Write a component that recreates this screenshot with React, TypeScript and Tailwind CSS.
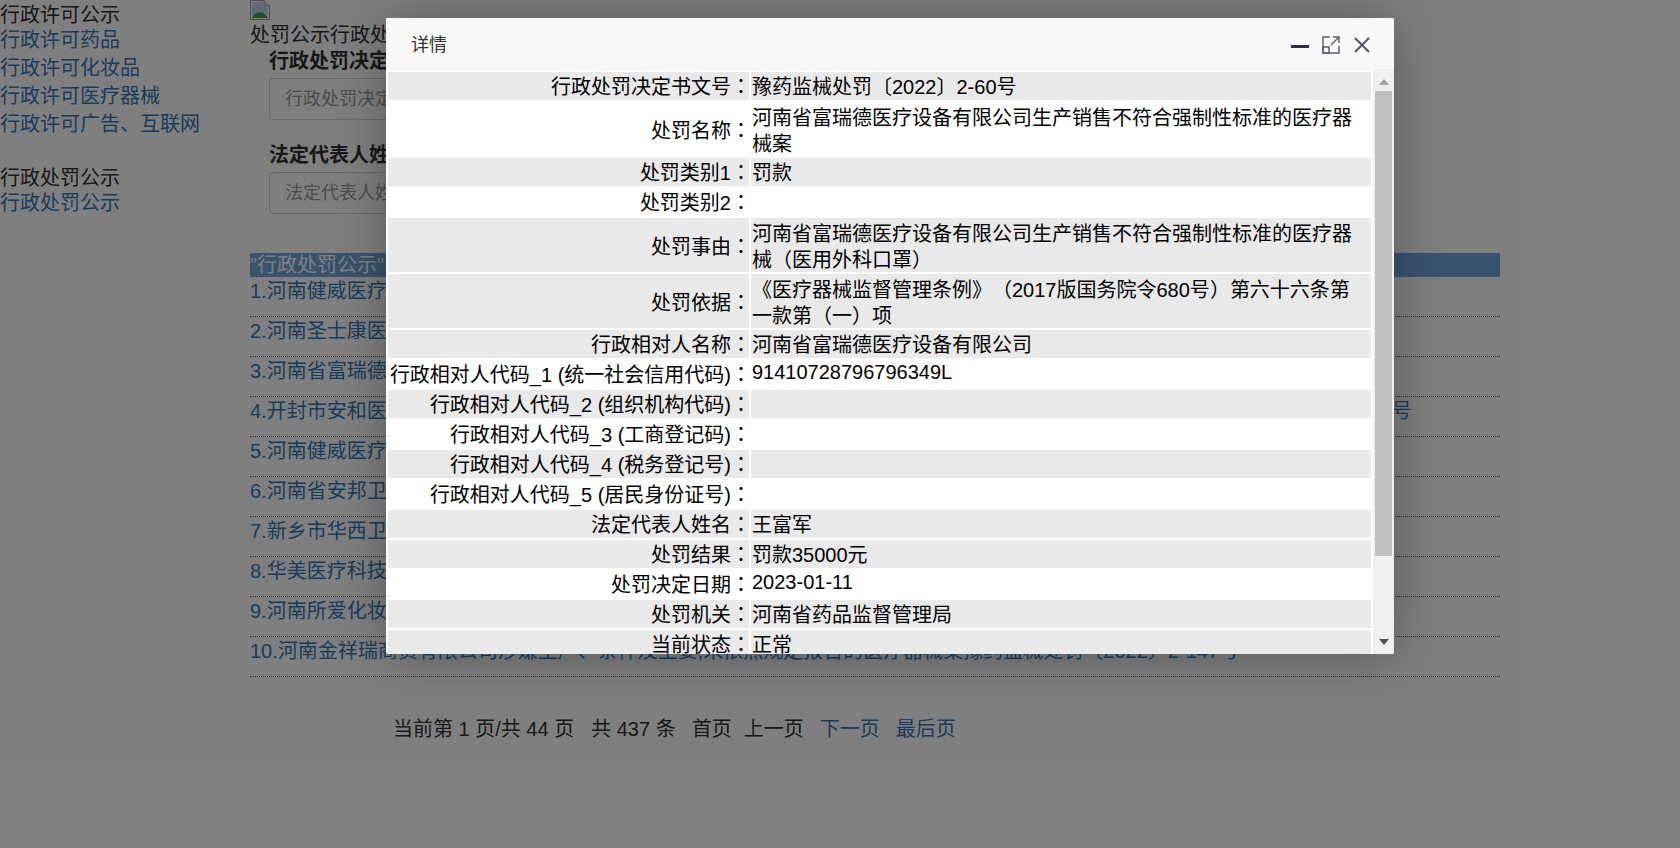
const navGroups = [
  { title: "行政许可公示", links: ["行政许可药品", "行政许可化妆品", "行政许可医疗器械", "行政许可广告、互联网"] },
  { title: "行政处罚公示", links: ["行政处罚公示"] },
]

const rows = [
  "1.河南健威医疗",
  "2.河南圣士康医",
  "3.河南省富瑞德",
  "4.开封市安和医",
  "5.河南健威医疗",
  "6.河南省安邦卫",
  "7.新乡市华西卫",
  "8.华美医疗科技",
  "9.河南所爱化妆",
  "10.河南金祥瑞商贸有限公司涉嫌生产、条件及主要,未依照规定报告的医疗器械案豫药监械处罚〔2022〕2-147号",
]

// label, value, grey row, how the value sits in its cell
type Sit = "raised" | "wrapped"
const details: [string, string, boolean, Sit?][] = [
  ["行政处罚决定书文号", "豫药监械处罚〔2022〕2-60号", true],
  ["处罚名称", "河南省富瑞德医疗设备有限公司生产销售不符合强制性标准的医疗器械案", false, "wrapped"],
  ["处罚类别1", "罚款", true],
  ["处罚类别2", "", false],
  ["处罚事由", "河南省富瑞德医疗设备有限公司生产销售不符合强制性标准的医疗器械（医用外科口罩）", true, "wrapped"],
  ["处罚依据", "《医疗器械监督管理条例》（2017版国务院令680号）第六十六条第一款第（一）项", true, "wrapped"],
  ["行政相对人名称", "河南省富瑞德医疗设备有限公司", true],
  ["行政相对人代码_1 (统一社会信用代码)", "91410728796796349L", false, "raised"],
  ["行政相对人代码_2 (组织机构代码)", "", true],
  ["行政相对人代码_3 (工商登记码)", "", false],
  ["行政相对人代码_4 (税务登记号)", "", true],
  ["行政相对人代码_5 (居民身份证号)", "", false],
  ["法定代表人姓名", "王富军", true],
  ["处罚结果", "罚款35000元", true],
  ["处罚决定日期", "2023-01-11", false, "raised"],
  ["处罚机关", "河南省药品监督管理局", true],
  ["当前状态", "正常", true],
]

// the TC face centres full-width punctuation in its box
function Punctuated({ text }: { text: string }) {
  return (
    <>
      {text.split(/([（）《》])/).map((part, i) =>
        i % 2 === 1 ? (
          <span key={i} className="leading-none font-['Noto_Sans_CJK_TC',sans-serif]">{part}</span>
        ) : (
          part
        )
      )}
    </>
  )
}

function BrokenImage() {
  return (
    <svg width="20" height="20" viewBox="0 0 20 20" className="block">
      <path d="M0.5 0.5H14L19.5 6V19.5H0.5Z" fill="#fff" stroke="#999" />
      <path d="M14 0.5V6H19.5" fill="#ddd" stroke="#999" />
      <path d="M2 2H13V7H18V14L2 18Z" fill="#c3d4ee" />
      <path d="M2 18C4 13 9 11 13 13C15 14 17 16 18 18Z" fill="#4d9a3c" />
    </svg>
  )
}

function Field({ label, placeholder }: { label: string; placeholder: string }) {
  return (
    <div className="h-[94px]">
      <div className="h-[32px] text-[20px] leading-[30px] font-bold whitespace-nowrap">{label}</div>
      <div className="w-[400px] h-[42px] border border-[#ccc] rounded-[4px] px-[15px] text-[18px] leading-[40px] text-[#999] whitespace-nowrap">
        {placeholder}
      </div>
    </div>
  )
}

function Modal() {
  return (
    <div className="absolute left-[386px] top-[18px] w-[1008px] h-[636px] bg-white rounded-[2px] shadow-[1px_1px_50px_rgba(0,0,0,0.3)] flex flex-col overflow-hidden">
      <div className="h-[52px] shrink-0 bg-[#f8f8f8] border-b border-[#eee] flex items-center pt-[2px] pl-[25px] pr-[23px] text-[#333] text-[18px]">
        <span>详情</span>
        <div className="ml-auto flex items-center gap-[13px]">
          <svg width="18" height="18" viewBox="0 0 18 18">
            <rect x="0" y="9" width="18" height="3" fill="#2e2d3c" />
          </svg>
          <svg width="18" height="18" viewBox="0 0 18 18" fill="none" stroke="#5f5f6a" strokeWidth="1.5">
            <path d="M8 1H1V17H17V10" />
            <path d="M11 1H17V7" />
            <path d="M17 1L9 9" />
            <rect x="1" y="11" width="6" height="6" />
          </svg>
          <svg width="18" height="18" viewBox="0 0 18 18" fill="none" stroke="#55555f" strokeWidth="2">
            <path d="M2 2L16 16M16 2L2 16" />
          </svg>
        </div>
      </div>
      <div className="flex flex-1 min-h-0">
        <div className="flex-1 min-w-0 overflow-hidden">
          <table className="table-fixed w-[987px] border-separate border-spacing-[2px] text-[20px] leading-[26px] text-black">
            <colgroup>
              <col className="w-[361px]" />
              <col />
            </colgroup>
            <tbody>
              {details.map(([label, value, grey, sit]) => (
                <tr key={label} className={grey ? "bg-[#e9e9e9]" : "bg-white"}>
                  <td className={sit === "wrapped" ? "pt-[4px] pl-[1px] pr-[1px] text-right whitespace-nowrap" : "pt-[2px] pl-[1px] pr-[1px] text-right whitespace-nowrap"}>
                    {label}
                    <span className="inline-block w-[17px] text-center leading-none font-['Noto_Sans_CJK_TC',sans-serif]">：</span>
                  </td>
                  {sit === "raised" && (
                    <td className="pb-[3px] pl-[1px] pr-[4px]">
                      <div className="-mt-[1px]"><Punctuated text={value} /></div>
                    </td>
                  )}
                  {sit === "wrapped" && (
                    <td className="pt-[3px] pl-[1px] pr-[4px]">
                      <div className="-mb-[1px]"><Punctuated text={value} /></div>
                    </td>
                  )}
                  {!sit && (
                    <td className="pt-[2px] pl-[1px] pr-[4px]">
                      <Punctuated text={value} />
                    </td>
                  )}
                </tr>
              ))}
            </tbody>
          </table>
        </div>
        <div className="w-[21px] shrink-0 bg-[#f0f0f0] flex flex-col items-center">
          <div className="h-[21px] pt-[3px] flex items-center justify-center">
            <svg width="10" height="6" viewBox="0 0 10 6"><path d="M5 0L10 6H0Z" fill="#a3a3a3" /></svg>
          </div>
          <div className="w-[17px] h-[465px] bg-[#bfbfbf]" />
          <div className="mt-auto h-[21px] pb-[3px] flex items-center justify-center">
            <svg width="10" height="6" viewBox="0 0 10 6"><path d="M0 0H10L5 6Z" fill="#505050" /></svg>
          </div>
        </div>
      </div>
    </div>
  )
}

export default function App() {
  return (
    <div className="relative h-[848px] overflow-hidden bg-white text-[#333] text-[20px] leading-[28px] [text-spacing-trim:space-all] font-['Liberation_Sans','Noto_Sans_CJK_SC',sans-serif]">
      <div className="flex w-[1500px]">
        <aside className="w-[250px] shrink-0">
          {navGroups.map((group) => (
            <div key={group.title} className="mb-[25px]">
              <div className="h-[26px] leading-[30px]">{group.title}</div>
              {group.links.map((link) => (
                <a key={link} className="block h-[28px] text-[#337ab7]">{link}</a>
              ))}
            </div>
          ))}
        </aside>
        <main className="flex-1 min-w-0">
          <BrokenImage />
          <div className="h-[26px] leading-[30px] whitespace-nowrap">处罚公示行政处罚</div>
          <div className="pl-[19px]">
            <Field label="行政处罚决定书文号" placeholder="行政处罚决定书文号" />
            <Field label="法定代表人姓名" placeholder="法定代表人姓名" />
          </div>
          <div className="mt-[19px] h-[24px] bg-[#72a6dc] text-white leading-[24px]">"行政处罚公示" 的</div>
          <ul>
            {rows.map((row, i) => (
              <li key={row} className="h-[40px] border-b border-dotted border-[#555] text-[#337ab7] leading-[28px] whitespace-nowrap">
                {row}
                {i === 3 && <span className="ml-[1005px]">号</span>}
              </li>
            ))}
          </ul>
          <div className="mt-[38px] pl-[143px] flex gap-[16px] leading-[28px]">
            <span className="mr-[1px]">当前第 1 页/共 44 页</span>
            <span>共 437 条</span>
            <span>首页</span>
            <span className="-ml-[4px]">上一页</span>
            <a className="text-[#337ab7]">下一页</a>
            <a className="text-[#337ab7]">最后页</a>
          </div>
        </main>
      </div>
      <div className="absolute inset-0 bg-black/50" />
      <Modal />
    </div>
  )
}
